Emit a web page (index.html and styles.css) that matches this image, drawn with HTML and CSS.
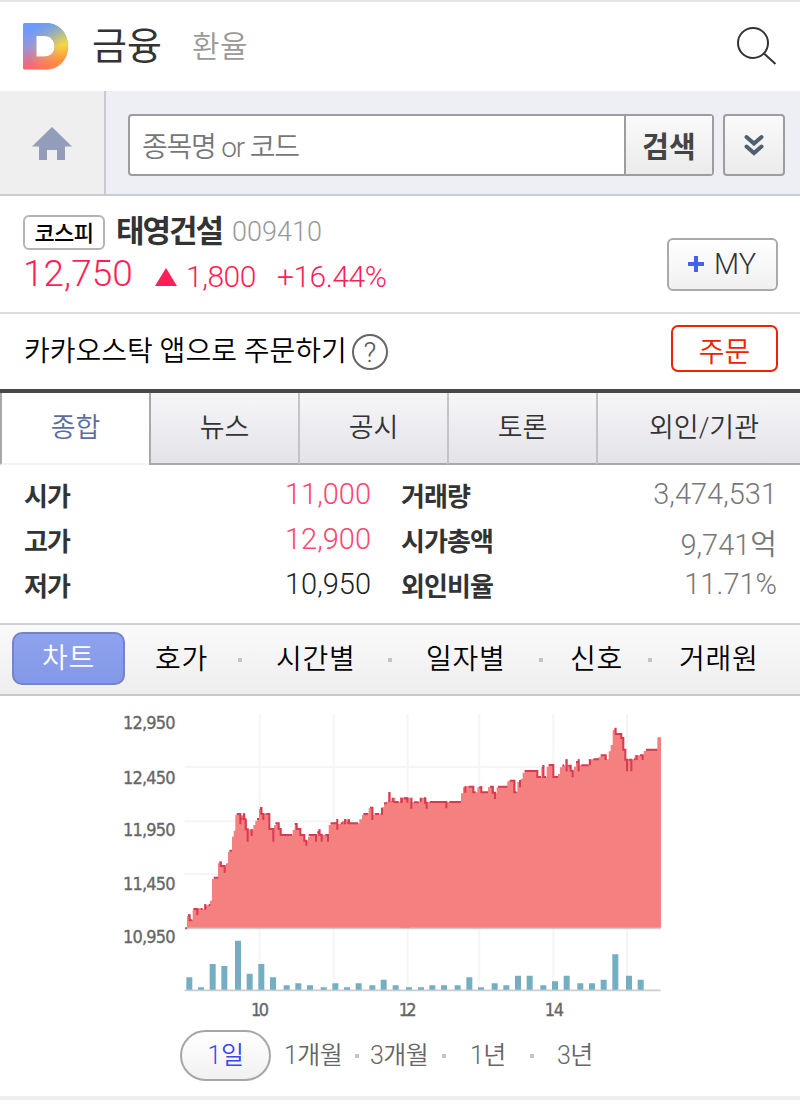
FILE: index.html
```html
<!DOCTYPE html>
<html lang="ko">
  <head>
    <meta charset="UTF-8">
    <meta name="viewport" content="width=device-width, initial-scale=1.0">
    <title>태영건설 - 금융</title>
    <link rel="stylesheet" href="styles.css">
  </head>
  <body>
    <!-- top -->
    <header>
      <svg class="logo" viewBox="0 0 46 48">
        <defs>
          <linearGradient id="warm" x1="0" y1="0" x2="0.15" y2="1">
            <stop offset="0.15" stop-color="#6c9bfb" />
            <stop offset="0.5" stop-color="#9696dc" />
            <stop offset="0.95" stop-color="#ff6470" />
          </linearGradient>
          <linearGradient id="sun" x1="0.3" y1="0" x2="0.55" y2="1">
            <stop offset="0.05" stop-color="#6f9df0" />
            <stop offset="0.3" stop-color="#a5b99f" />
            <stop offset="0.58" stop-color="#f7d83c" />
            <stop offset="0.9" stop-color="#ff9138" />
          </linearGradient>
          <linearGradient id="fade" x1="0" y1="0" x2="1" y2="0">
            <stop offset="0.15" stop-color="#000" />
            <stop offset="0.85" stop-color="#fff" />
          </linearGradient>
          <mask id="half"><rect width="46" height="48" fill="url(#fade)" /></mask>
        </defs>
        <path fill="url(#warm)" fill-rule="evenodd" d="M1.500 1H23C36 1 45 11 45 24S36 47.500 23 47.500H1.500Q0 47.500 0 46V2.500Q0 1 1.500 1ZM13.500 14V34.500H21.500C28 34.500 31.500 30 31.500 24.500S28 14 21.500 14Z" />
        <g mask="url(#half)">
          <path fill="url(#sun)" fill-rule="evenodd" d="M1.500 1H23C36 1 45 11 45 24S36 47.500 23 47.500H1.500Q0 47.500 0 46V2.500Q0 1 1.500 1ZM13.500 14V34.500H21.500C28 34.500 31.500 30 31.500 24.500S28 14 21.500 14Z" />
        </g>
      </svg>
      <h1>금융</h1>
      <a class="rate">환율</a>
      <svg class="glass" viewBox="0 0 42 40">
        <circle cx="17" cy="17" r="15" />
        <path d="M28 27.500L39.500 38" />
      </svg>
    </header>

    <!-- search bar -->
    <div id="search">
      <a class="home">
        <svg width="42" height="36" viewBox="0 0 42 36">
          <path d="M21 1L41 20.500H34V34H26V24H16V34H8V20.500H1Z" />
        </svg>
      </a>
      <div class="box">
        <span class="query">종목명 or 코드</span>
        <button class="go">검색</button>
      </div>
      <button class="more">
        <svg width="22" height="24" viewBox="0 0 22 24">
          <path d="M3.500 4L11 10.500L18.500 4M3.500 13.500L11 20L18.500 13.500" />
        </svg>
      </button>
    </div>

    <!-- stock name and price -->
    <div id="stock">
      <div class="info">
        <div class="title"><span class="market">코스피</span><b>태영건설</b><span class="code">009410</span></div>
        <div class="price"><span class="now">12,750</span><i class="up"></i><span class="diff">1,800</span><span class="pct">+16.44%</span></div>
      </div>
      <button class="my"><i class="plus"></i>MY</button>
    </div>

    <div id="order">
      <span>카카오스탁 앱으로 주문하기</span>
      <span class="help">?</span>
      <button class="buy">주문</button>
    </div>

    <!-- tabs -->
    <nav id="tabs">
      <a class="on">종합</a>
      <a>뉴스</a>
      <a>공시</a>
      <a>토론</a>
      <a class="last">외인/기관</a>
    </nav>

    <div id="stats">
      <b>시가</b><span class="red">11,000</span><b>거래량</b><span>3,474,531</span>
      <b>고가</b><span class="red">12,900</span><b>시가총액</b><span class="cap">9,741억</span>
      <b>저가</b><span class="black">10,950</span><b>외인비율</b><span>11.71%</span>
    </div>

    <nav id="menu">
      <a class="on">차트</a>
      <a class="m1">호가</a><i></i>
      <a class="m2">시간별</a><i></i>
      <a class="m3">일자별</a><i></i>
      <a class="m4">신호</a><i></i>
      <a class="m5">거래원</a>
    </nav>

    <!-- price and volume chart, 3 units = 1px -->
    <div id="chart">
      <svg width="570" height="325" viewBox="0 0 1710 975">
        <path class="grid" d="M224 201H1652M224 364H1652M224 522H1652M449 42V868M671 42V868M893 42V868M1108 42V868M1330 42V868M1551 42V868" />
        <path class="base" d="M224 685H1652M224 871H1652" />
        <g class="area">
          <path d="M231 683V648H236V643H240V660H248V630H254V625H272V628H282V616H300V602H306V537H312V532H324V490H330V486H335V497H348V490H354V455H360V451H366V410H371V392H376V345H382V340H392V346H400V340H406V360H411V388H430V375H436V362H442V355H447V327H452V322H457V340H480V387H492V375H498V368H508V387H514V404H548V390H554V376H558V370H562V387H572V404H584V422H594V410H600V404H622V395H628V387H632V404H656V375H662V370H680V358H684V372H696V364H704V358H720V370H748V358H756V345H764V340H776V325H784V322H790V345H808V340H816V322H822V310H828V305H836V277H842V303H848V293H856V305H872V293H900V683Z" />
          <path d="M0 683V305H4V295H24V305H32V293H37V306H60V293H80V306H183V280H189V262H195V259H222V277H232V262H238V259H246V277H264V262H270V259H282V278H290V262H296V259H322V244H328V240H346V276H352V246H358V240H362V236H368V218H374V213H414V231H424V200H430V195H433V231H440V200H446V195H462V231H474V222H480V202H486V196H496V178H502V196H514V212H520V214H522V200H528V184H534V178H538V196H566V178H596V171H602V166H620V178H626V154H632V135H638V90H643V84H648V101H665V114H671V148H676V178H704V166H731V153H737V148H772V112H783V683Z" transform="translate(870 0)" />
        </g>
        <g class="line">
          <path d="M226 685H231M234 646H239V661H247M250 627H262V646M272 627H278M286 612V629M296 615H301M311 533H325M328 487H332V498H344V518M358 452H366M380 342H391V373M394 356H398M402 340V358H407V388H413V425M425 388V408M441 357H447M450 324H454V342H460V360M469 342H478V387H490V425M496 370H506V387H512V405H546M554 372H560V387H571V405H583V422H589V437M596 405H618V425M622 397H628V388V404H635V425M646 405H654V425M662 370H680M682 357V389M692 370H700M705 357V373M711 368H717V358V370H744M760 342H774M780 323H787V360M794 342H807M816 323V344M822 310H830M838 276V307M848 306V293M850 306H866M875 293V308M882 295H892" />
          <path d="M4 293V308M14 295H22V308M34 293V326M42 307H56M62 293V306M72 295H75V308H80V326M89 306H139V325M148 306H183M196 259V278M206 260H220V277H227M238 262H244V277H264M270 260H278V278H285V297M294 260H322M330 242H343V277H350M360 240V262M374 213H412V231H423M430 195V231H438M446 195H460V231H474M488 196H492M500 178V214M505 197H512V212H518V232M528 186H536M536 178V214M544 196H566M570 178V196M580 178H597M602 166H617V180M644 86H647V102H664V114H670V149H676V179H681V214M686 179H694V214M702 178H706M710 166V180M720 166H728V180M738 149H772" transform="translate(870 0)" />
        </g>
        <g class="volume">
          <path d="M238 869V832M273 869V862M308 869V792M343 869V798M384 869V722M419 869V821M454 869V792M489 869V832M530 869V856M565 869V850M600 869V856M641 869V862M676 869V850M711 869V862M746 869V850M787 869V856M821 869V839M857 869V856M897 869V862M933 869V862M967 869V856M1002 869V856M1043 869V856M1078 869V832M1113 869V862M1154 869V850M1189 869V856M1224 869V827M1259 869V827M1300 869V856M1335 869V844M1370 869V827M1411 869V850M1446 869V850M1481 869V839M1516 869V763M1557 869V827M1592 869V839" />
        </g>
        <g class="label">
          <text x="39" y="88" textLength="158">12,950</text>
          <text x="39" y="251" textLength="158">12,450</text>
          <text x="39" y="408" textLength="158">11,950</text>
          <text x="39" y="571" textLength="158">11,450</text>
          <text x="39" y="729" textLength="158">10,950</text>
          <text x="423" y="949" textLength="54">10</text>
          <text x="866" y="949" textLength="54">12</text>
          <text x="1304" y="949" textLength="58">14</text>
        </g>
      </svg>
    </div>

    <nav id="period">
      <a class="on">1일</a>
      <a class="p1">1개월</a><i></i>
      <a class="p2">3개월</a><i></i>
      <a class="p3">1년</a><i></i>
      <a class="p4">3년</a>
    </nav>
  </body>
</html>
```
FILE: styles.css
```css
* {
  box-sizing: border-box;
}
body {
  margin: 0;
  width: 800px;
  height: 1108px;
  overflow: hidden;
  background-color: #fff;
  font-family: Roboto, "Noto Sans CJK KR", sans-serif;
  font-weight: 350;
  white-space: nowrap;
}
button {
  font: inherit;
  padding: 0;
  margin: 0;
}
svg {
  display: block;
}

/* top */
header {
  display: flex;
  align-items: center;
  height: 91px;
  box-shadow: inset 0 2px #e6e6e6;
  padding: 1px 23px 0;
}
.logo {
  width: 46px;
  height: 48px;
}
h1 {
  margin: 0 0 0 23px;
  width: 77px;
  font-size: 38px;
  line-height: 50px;
  font-weight: 400;
  color: #333;
}
.rate {
  margin: 2px 0 0 23px;
  font-size: 30px;
  line-height: 40px;
  letter-spacing: 0.5px;
  color: #999;
}
.glass {
  width: 42px;
  height: 40px;
  margin-left: auto;
  margin-right: -1px;
  fill: none;
  stroke: #333;
  stroke-width: 2;
}

/* search bar */
#search {
  display: flex;
  align-items: center;
  height: 105px;
  background-color: #eeeff5;
  border-bottom: 2px solid #c9cdd2;
}
.home {
  width: 106px;
  height: 103px;
  background-color: #efefef;
  border-right: 2px solid #c8c9d1;
  padding: 35px 0 0 31px;
}
.home path {
  fill: #939dba;
}
.box {
  display: flex;
  width: 586px;
  height: 62px;
  margin: 4px 0 0 22px;
  border: 2px solid #9d9d9d;
  border-radius: 4px;
  background-color: #fff;
}
.query {
  flex: 1;
  padding: 2px 0 0 12px;
  font-size: 28px;
  line-height: 60px;
  letter-spacing: -1.2px;
  color: #777;
}
.go {
  width: 88px;
  border: 0;
  border-left: 2px solid #9d9d9d;
  background: linear-gradient(#fafafa, #ebebeb);
  font-size: 29px;
  font-weight: 700;
  color: #444;
}
.more {
  width: 62px;
  height: 62px;
  margin: 4px 0 0 9px;
  border: 2px solid #9d9d9d;
  border-radius: 4px;
  background: linear-gradient(#fafafa, #ebebeb);
}
.more svg {
  margin: 0 auto;
  fill: none;
  stroke: #50606e;
  stroke-width: 4;
  stroke-linecap: round;
}

/* stock name and price */
#stock {
  display: flex;
  justify-content: space-between;
  height: 118px;
  padding: 16px 22px 0 23px;
  border-bottom: 2px solid #ddd;
}
.title {
  display: flex;
  height: 40px;
  line-height: 40px;
}
.market {
  width: 82px;
  height: 35px;
  margin-top: 3px;
  border: 2px solid #b4b4b4;
  border-radius: 6px;
  text-align: center;
  font-size: 22px;
  line-height: 34px;
  font-weight: 500;
  letter-spacing: -0.5px;
  color: #000;
}
.title b {
  margin-left: 11px;
  width: 108px;
  font-size: 31px;
  font-weight: 700;
  letter-spacing: -2px;
  color: #333;
}
.code {
  margin-left: 8px;
  font-size: 27px;
  color: #999;
}
.price {
  display: flex;
  align-items: center;
  height: 46px;
  color: #ff1f57;
}
.now {
  width: 110px;
  margin-top: -3px;
  font-size: 37px;
}
.up {
  margin: 4px 0 0 22px;
  border: 11px solid transparent;
  border-top: 0;
  border-bottom: 18px solid #ff1f57;
}
.diff {
  margin: 3px 0 0 9px;
  width: 84px;
  font-size: 30px;
  letter-spacing: -0.5px;
}
.pct {
  margin: 3px 0 0 7px;
  font-size: 30px;
  letter-spacing: -0.5px;
}
.my {
  display: flex;
  align-items: center;
  width: 111px;
  height: 53px;
  margin-top: 26px;
  padding-left: 19px;
  border: 2px solid #aaa;
  border-radius: 6px;
  background: linear-gradient(#fff, #f0f0f0);
  font-size: 29px;
  line-height: 46px;
  padding-bottom: 2px;
  color: #333;
}
.plus {
  width: 16px;
  height: 16px;
  margin-right: 10px;
  background: linear-gradient(#4462e8, #4462e8) center / 16px 4px no-repeat,
    linear-gradient(#4462e8, #4462e8) center / 4px 16px no-repeat;
}

#order {
  display: flex;
  align-items: center;
  height: 75px;
  padding: 0 22px 0 24px;
  font-size: 28px;
  line-height: 40px;
  color: #000;
}
.help {
  width: 36px;
  height: 36px;
  margin: 0 0 0 5px;
  border: 2px solid #666;
  border-radius: 50%;
  text-align: center;
  line-height: 34px;
  color: #555;
}
.buy {
  width: 107px;
  height: 47px;
  margin: -6px 0 0 auto;
  border: 2px solid #ee2200;
  border-radius: 7px;
  background-color: #fff;
  line-height: 46px;
  padding-top: 3px;
  color: #ee2200;
}

/* tabs */
#tabs {
  display: flex;
  height: 76px;
  border-top: 4px solid #484848;
}
#tabs a {
  width: 149px;
  height: 72px;
  border-left: 2px solid #c4c4c6;
  border-bottom: 2px solid #a8a8a8;
  background: linear-gradient(#f6f6f9, #e3e3e8);
  text-align: center;
  font-size: 27px;
  line-height: 71px;
  color: #333;
}
#tabs a.on {
  border-left-color: #a8a8a8;
  border-bottom-color: #f3f3f3;
  background: #fff;
  color: #5b6e9e;
}
#tabs a:nth-child(2) {
  border-left-color: #a8a8a8;
}
#tabs a.last {
  width: 204px;
  padding-left: 10px;
}

#stats {
  display: grid;
  grid-template-columns: 100px 247px 130px 276px;
  grid-auto-rows: 45px;
  height: 158px;
  padding: 7px 23px 0 24px;
  line-height: 45px;
}
#stats b {
  font-size: 26px;
  font-weight: 700;
  letter-spacing: -0.9px;
  color: #333;
  padding-top: 3px;
}
#stats b:nth-child(4n+3) {
  padding-left: 30px;
}
#stats span {
  text-align: right;
  font-size: 29px;
  color: #777;
}
#stats .red {
  color: #ff4570;
}
#stats .black {
  color: #222;
}
#stats .cap {
  padding-top: 6px;
}

/* menu */
#menu {
  display: flex;
  align-items: center;
  height: 73px;
  padding-left: 12px;
  border-top: 2px solid #d0d0d6;
  border-bottom: 2px solid #c8c8ce;
  background: linear-gradient(#fafafa, #eee);
  font-size: 28px;
  line-height: 50px;
  letter-spacing: 0.8px;
  color: #000;
}
#menu .on {
  width: 113px;
  height: 53px;
  margin-right: 30px;
  margin-top: -2px;
  border: 2px solid #7485c4;
  border-radius: 10px;
  background: linear-gradient(#8fa2ee, #8398e6);
  text-align: center;
  color: #fff;
}
#menu i, #period i {
  width: 4px;
  height: 4px;
  background-color: #c4c4c4;
}
.m1 { width: 83px; }
.m2 { width: 112px; margin-left: 34px; }
.m3 { width: 113px; margin-left: 34px; }
.m4 { width: 78px; margin-left: 27px; }
.m5 { margin-left: 27px; }

/* chart */
#chart {
  height: 334px;
  padding: 4px 0 0 110px;
}
.grid {
  fill: none;
  stroke: #f5f5f5;
  stroke-width: 6;
}
.base {
  stroke: #ccc;
  stroke-width: 5;
}
.area {
  fill: #f48080;
}
.line {
  fill: none;
  stroke: #d83a50;
  stroke-width: 6;
}
.volume {
  stroke: #74aec2;
  stroke-width: 18;
}
.label {
  font-family: "DejaVu Sans Condensed", "DejaVu Sans", sans-serif;
  font-size: 54px;
  font-weight: 400;
  fill: #666;
  stroke: #666;
  stroke-width: 1;
}

/* period */
#period {
  display: flex;
  align-items: center;
  box-sizing: content-box;
  height: 51px;
  padding: 0 0 15px 180px;
  border-bottom: 4px solid #eee;
  font-size: 25px;
  line-height: 48px;
  letter-spacing: -0.5px;
  color: #666;
}
#period .on {
  width: 91px;
  height: 51px;
  margin-right: 13px;
  border: 2px solid #a6a6a6;
  border-radius: 26px;
  background: linear-gradient(#fff, #f1f1f1);
  text-align: center;
  line-height: 47px;
  color: #3d46f5;
}
.p1 { width: 71px; }
.p2 { width: 72px; margin-left: 11px; }
.p3 { width: 60px; margin-left: 24px; }
.p4 { margin-left: 23px; }
```
